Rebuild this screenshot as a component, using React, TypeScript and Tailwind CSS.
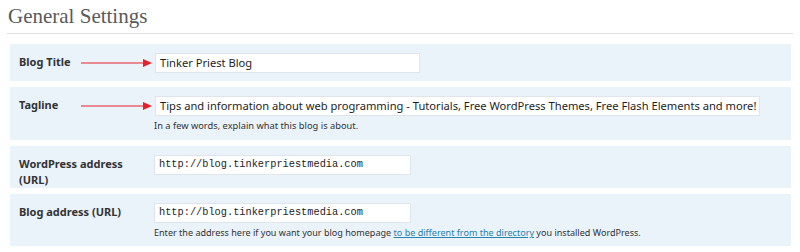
const font = "font-['Noto_Sans','Open_Sans',sans-serif]";

function Arrow() {
  return (
    <svg width="72" height="10" viewBox="0 0 72 10" className="shrink-0">
      <line x1="0" y1="5" x2="64" y2="5" stroke="#e8202a" strokeWidth="1" />
      <polygon points="62,1 71,5 62,9" fill="#e8202a" />
    </svg>
  );
}

function Row({
  label,
  children,
  className,
}: {
  label: React.ReactNode;
  children: React.ReactNode;
  className: string;
}) {
  return (
    <div className={`flex bg-[#eaf2fa] pl-[9px] pt-[9px] ${className}`}>
      <div className="w-[135px] shrink-0">
        <div className={`${font} text-[11px] font-bold leading-[16px] text-[#333] w-[120px] pt-[1px]`}>
          {label}
        </div>
      </div>
      <div className="flex flex-col">{children}</div>
    </div>
  );
}

function Field({ value, width, mono }: { value: string; width: string; mono?: boolean }) {
  return (
    <div
      className={`${width} h-[20px] bg-white border border-[#dfe5ec] pl-[4px] flex items-center text-[#1e1e1e] whitespace-nowrap overflow-hidden ${
        mono ? "font-['Liberation_Mono',monospace] text-[10.3px]" : `${font} text-[11.15px]`
      }`}
    >
      {value}
    </div>
  );
}

export default function App() {
  return (
    <div className="w-[800px] h-[252px] bg-white overflow-hidden">
      <h2 className="font-['Liberation_Serif',Georgia,serif] text-[21px] leading-[26px] text-[#5a5a5a] pl-[8px] pt-[3px]">
        General Settings
      </h2>
      <div className="mx-[7px] mt-[4px] border-t border-[#dedede]" />
      <div className="ml-[10px] mr-[9px] mt-[10px] flex flex-col gap-[6px]">
        <Row className="h-[37px]" label="Blog Title">
          <div className="flex items-center -ml-[73px]">
            <Arrow />
            <div className="ml-[2px]">
              <Field value="Tinker Priest Blog" width="w-[265px]" />
            </div>
          </div>
        </Row>
        <Row className="h-[53px]" label="Tagline">
          <div className="flex items-center -ml-[73px]">
            <Arrow />
            <div className="ml-[2px]">
              <Field
                value="Tips and information about web programming - Tutorials, Free WordPress Themes, Free Flash Elements and more!"
                width="w-[605px]"
              />
            </div>
          </div>
          <p className={`${font} text-[9.3px] leading-[12px] mt-[4px] text-[#333]`}>
            In a few words, explain what this blog is about.
          </p>
        </Row>
        <Row className="h-[42px]" label="WordPress address (URL)">
          <Field value="http://blog.tinkerpriestmedia.com" width="w-[257px]" mono />
        </Row>
        <Row className="h-[52px]" label="Blog address (URL)">
          <Field value="http://blog.tinkerpriestmedia.com" width="w-[257px]" mono />
          <p className={`${font} text-[9.05px] leading-[12px] mt-[4px] text-[#333]`}>
            Enter the address here if you want your blog homepage{" "}
            <a href="#" className="text-[#2583ad] underline">
              to be different from the directory
            </a>{" "}
            you installed WordPress.
          </p>
        </Row>
      </div>
    </div>
  );
}
